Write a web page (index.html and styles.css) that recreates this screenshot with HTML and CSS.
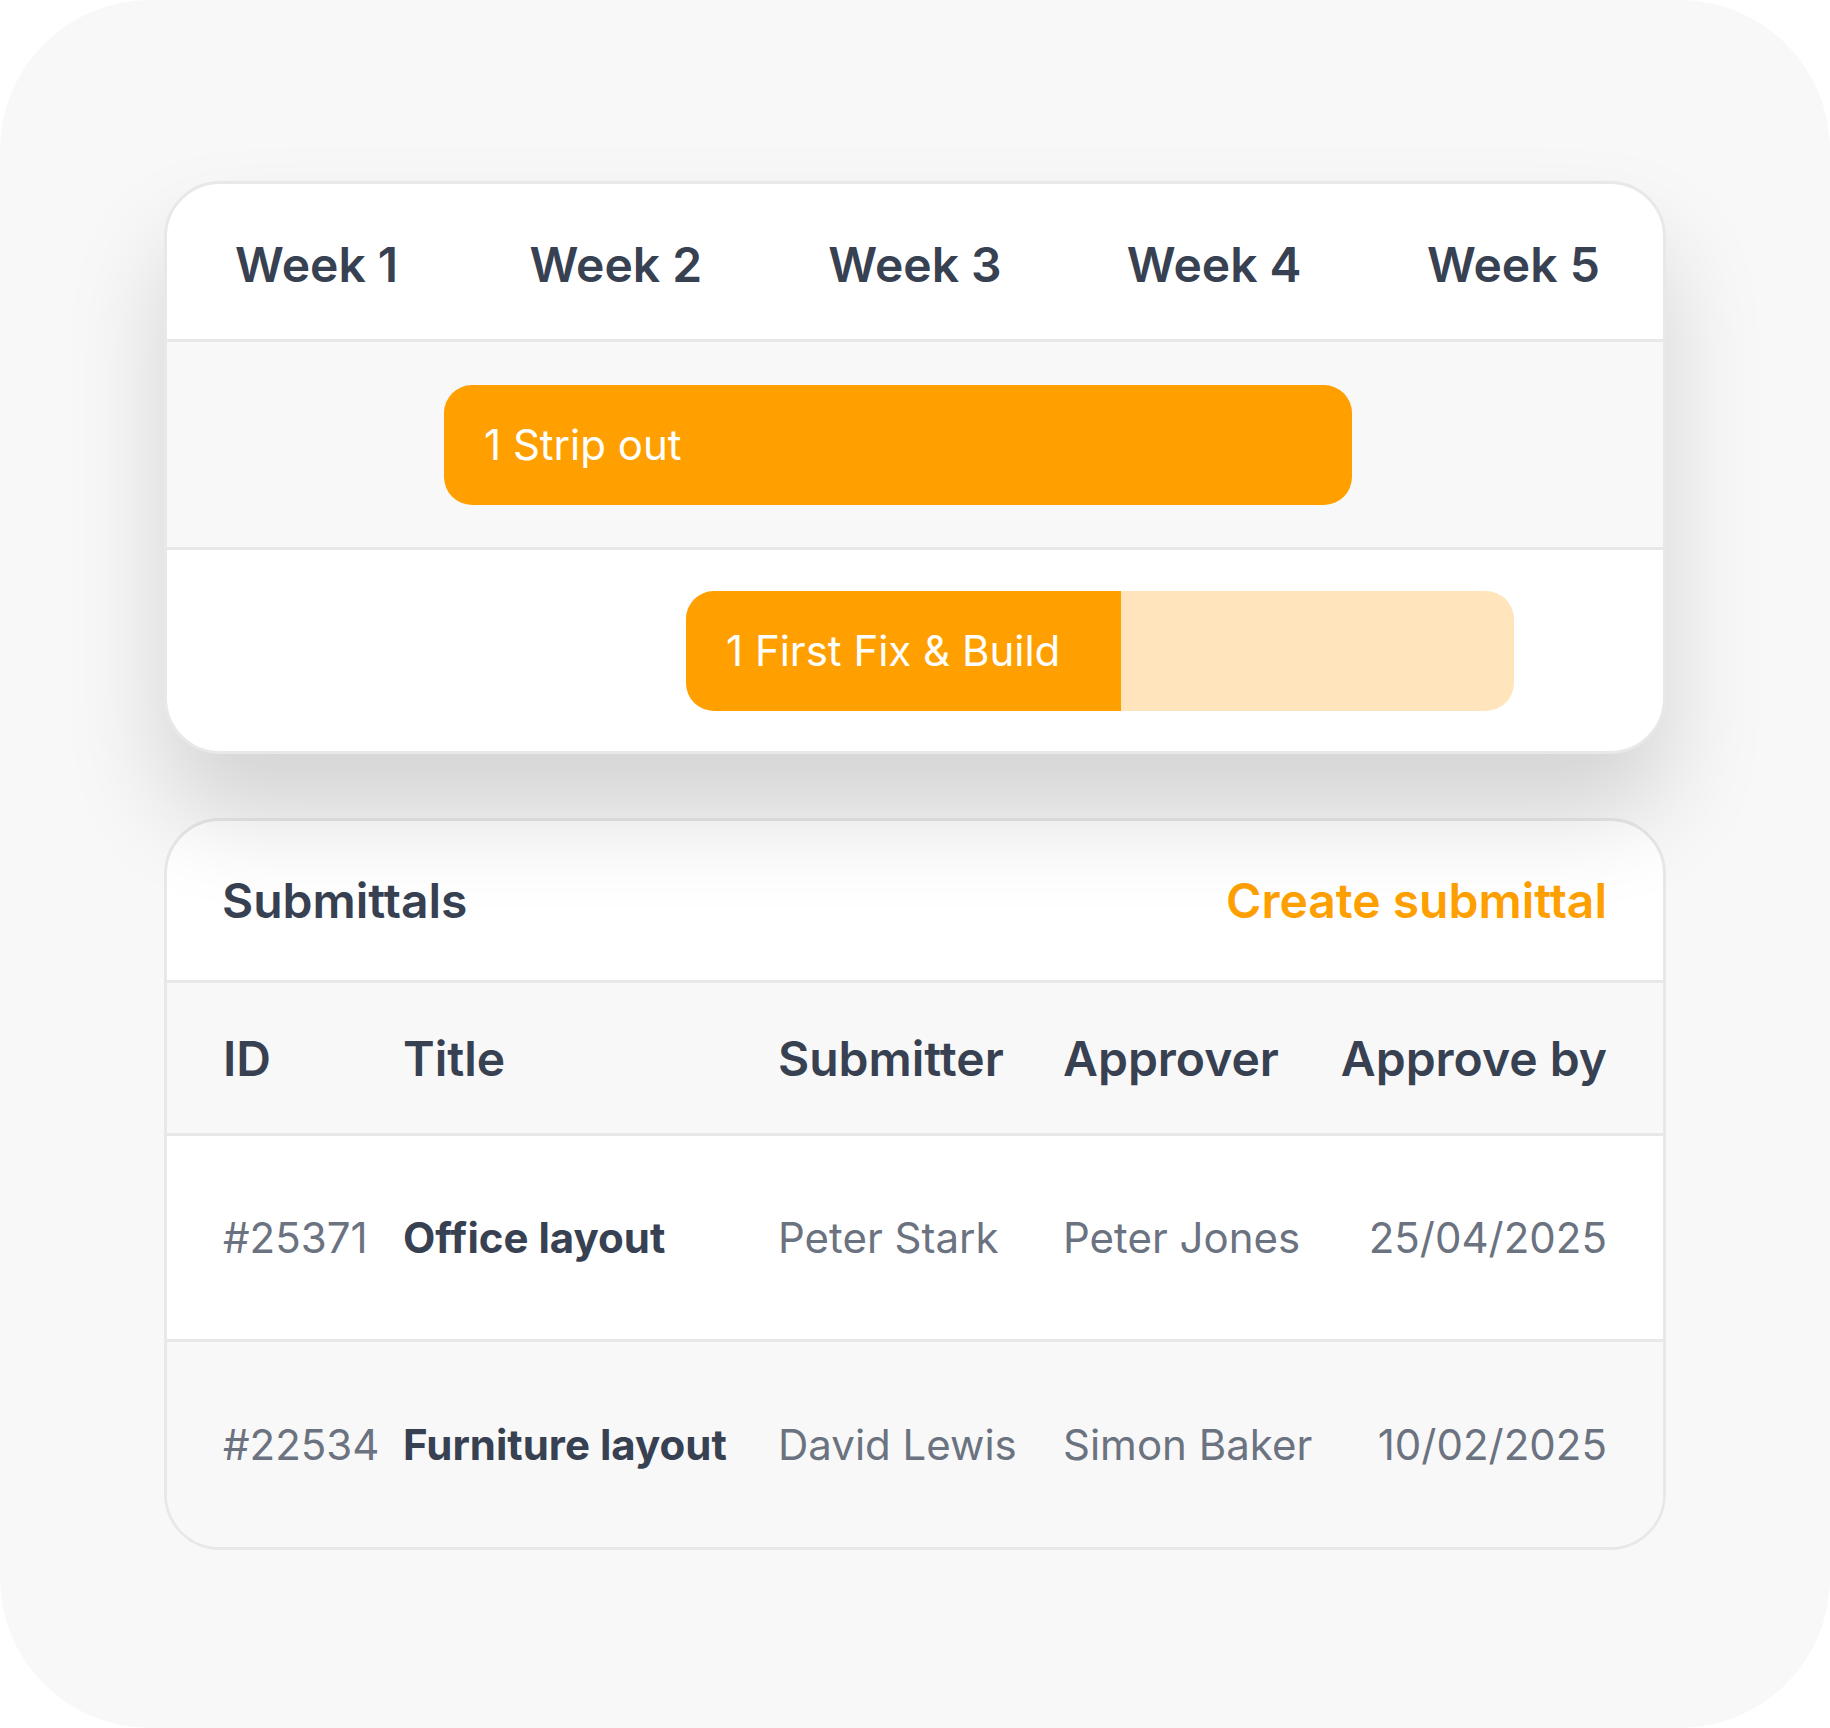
FILE: index.html
```html
<!DOCTYPE html>
<html lang="en">
<head>
<meta charset="utf-8">
<title>Schedule and submittals</title>
<link rel="stylesheet" href="styles.css">
</head>
<body>
<div class="frame">
  <section class="card gantt">
    <div class="weeks">
      <div class="week">Week 1</div>
      <div class="week">Week 2</div>
      <div class="week">Week 3</div>
      <div class="week">Week 4</div>
      <div class="week">Week 5</div>
    </div>
    <div class="lane lane-alt">
      <div class="bar" style="margin-left:277px;width:908px">
        <div class="fill" style="width:100%">1 Strip out</div>
      </div>
    </div>
    <div class="lane lane-last">
      <div class="bar" style="margin-left:519px;width:828px">
        <div class="fill" style="width:435px">1 First Fix &amp; Build</div>
      </div>
    </div>
  </section>

  <section class="card table-card">
    <div class="tc-head">
      <div class="tc-title">Submittals</div>
      <div class="tc-action">Create submittal</div>
    </div>
    <div class="grid thead">
      <div>ID</div>
      <div>Title</div>
      <div>Submitter</div>
      <div>Approver</div>
      <div class="right">Approve by</div>
    </div>
    <div class="grid row">
      <div>#25371</div>
      <div class="title">Office layout</div>
      <div>Peter Stark</div>
      <div>Peter Jones</div>
      <div class="right">25/04/2025</div>
    </div>
    <div class="grid row row-alt">
      <div>#22534</div>
      <div class="title">Furniture layout</div>
      <div>David Lewis</div>
      <div>Simon Baker</div>
      <div class="right">10/02/2025</div>
    </div>
  </section>
</div>
</body>
</html>
```

FILE: styles.css
```css
html, body {
  margin: 0;
  padding: 0;
  background: #ffffff;
}

.frame {
  width: 1830px;
  height: 1728px;
  box-sizing: border-box;
  background: #f8f8f8;
  border-radius: 150px;
  padding: 181px 164px 0;
  display: flex;
  flex-direction: column;
  gap: 64px;
  font-family: Inter, "Noto Sans", "Liberation Sans", sans-serif;
  color: #374151;
}

.card {
  border: 3px solid #e8e8e8;
  border-radius: 56px;
  overflow: hidden;
  background: #ffffff;
}

.gantt {
  position: relative;
  z-index: 1;
  box-shadow: 0 60px 100px rgba(0, 0, 0, 0.15);
}

.weeks {
  display: grid;
  grid-template-columns: repeat(5, 1fr);
  height: 149px;
  padding-top: 6px;
  align-items: center;
  text-align: center;
  border-bottom: 3px solid #e8e8e8;
  font-size: 48px;
  font-weight: 600;
  color: #374151;
}

.lane {
  height: 205px;
  display: flex;
  align-items: center;
  border-bottom: 3px solid #e8e8e8;
}

.lane-alt {
  background: #f8f8f8;
}

.lane-last {
  height: 201px;
  border-bottom: 0;
}

.bar {
  height: 120px;
  border-radius: 28px;
  background: #ffe4bc;
  overflow: hidden;
  display: flex;
}

.fill {
  background: #ffa000;
  color: #ffffff;
  font-size: 42px;
  font-weight: 400;
  display: flex;
  align-items: center;
  padding-left: 40px;
  box-sizing: border-box;
  white-space: nowrap;
}

.tc-head {
  height: 159px;
  display: flex;
  justify-content: space-between;
  align-items: center;
  padding: 0 56px 0 55px;
  border-bottom: 3px solid #e8e8e8;
  font-size: 48px;
  font-weight: 600;
}

.tc-title {
  color: #374151;
}

.tc-action {
  color: #ffa000;
}

.grid {
  display: grid;
  grid-template-columns: 180px 375px 285px 1fr auto;
  align-items: center;
  padding: 0 56px 0 56px;
  border-bottom: 3px solid #e8e8e8;
  white-space: nowrap;
}

.thead {
  height: 150px;
  background: #f8f8f8;
  font-size: 48px;
  font-weight: 600;
  color: #374151;
}

.row {
  height: 203px;
  font-size: 42px;
  font-weight: 400;
  color: #6b7280;
}

.row-alt {
  height: 205px;
  background: #f8f8f8;
  border-bottom: 0;
}

.title {
  font-weight: 700;
  color: #374151;
}

.right {
  text-align: right;
}
```
